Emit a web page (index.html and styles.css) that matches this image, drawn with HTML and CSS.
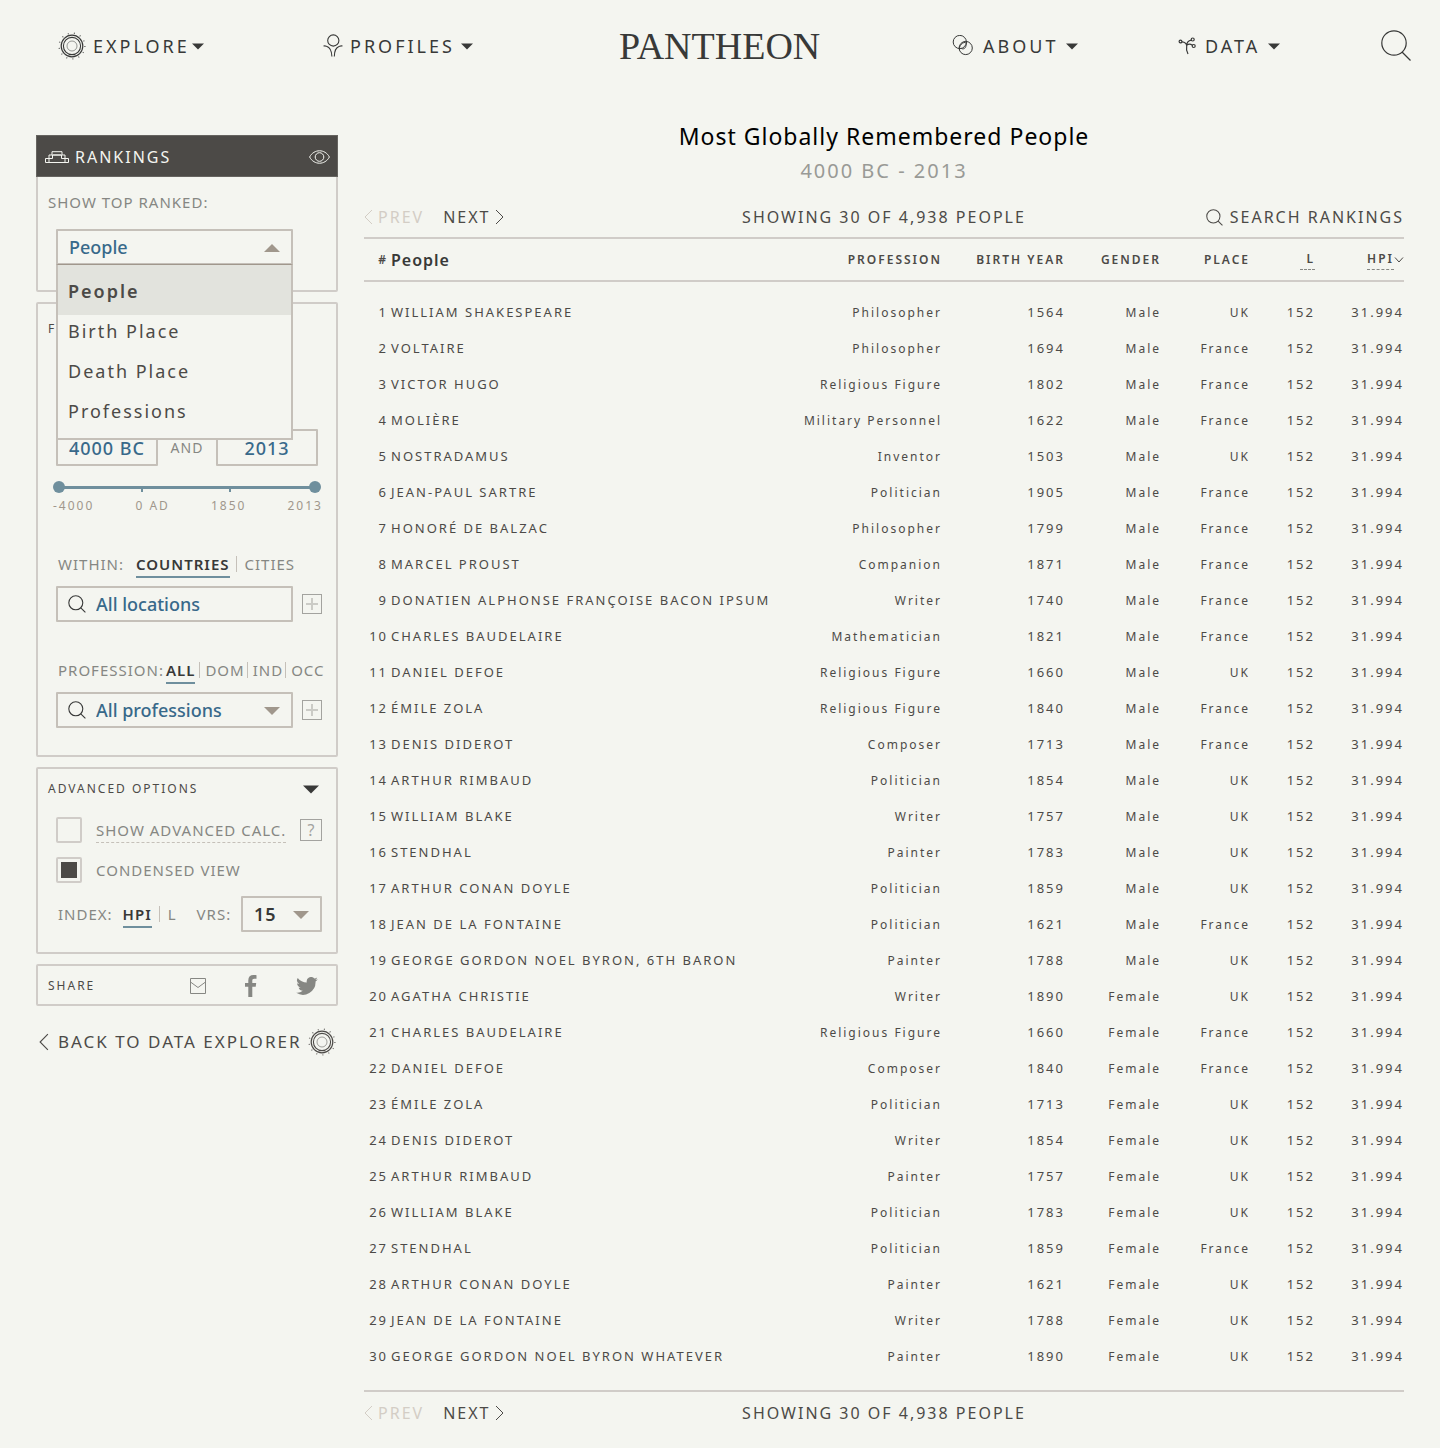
FILE: index.html
```html
<!DOCTYPE html>
<html lang="en">
<head>
<meta charset="utf-8">
<meta name="viewport" content="width=device-width, initial-scale=1">
<title>Pantheon – Rankings</title>
<link rel="stylesheet" href="styles.css">
</head>
<body>
<svg class="defs" aria-hidden="true">
  <symbol id="sun" viewBox="0 0 28 28"><g fill="none" stroke="currentColor"><circle cx="14" cy="14" r="10.8" stroke-width="1.2"/><circle cx="14" cy="14" r="8.6" stroke-width="1.1"/><circle cx="14" cy="14" r="5" stroke-width="1" opacity=".5"/><circle cx="14" cy="14" r="12.9" stroke-width="1.3" stroke-dasharray="1 5.234" opacity=".8"/></g></symbol>
  <symbol id="search" viewBox="0 0 32 32"><g fill="none" stroke="currentColor" stroke-width="1.200"><circle cx="14" cy="13" r="12.200"/><path d="M22 22l8.500 8.500"/></g></symbol>
  <symbol id="search-sm" viewBox="0 0 18 18"><g fill="none" stroke="currentColor" stroke-width="1.100"><circle cx="7.800" cy="7.800" r="7"/><path d="M12.800 12.800l4.600 4.600"/></g></symbol>
  <symbol id="plus" viewBox="0 0 12 12"><path d="M6 0v12M0 6h12" fill="none" stroke="currentColor" stroke-width="2"/></symbol>
  <symbol id="caret" viewBox="0 0 16 8"><path d="M0 0h16L8 8z" fill="currentColor"/></symbol>
  <symbol id="left" viewBox="0 0 9 16"><path d="M8 1L1 8l7 7" fill="none" stroke="currentColor"/></symbol>
  <symbol id="right" viewBox="0 0 9 16"><path d="M1 1l7 7-7 7" fill="none" stroke="currentColor"/></symbol>
</svg>

<header class="site-header">
  <a class="nav-item" href="#explore"><svg class="icon-sun"><use href="#sun"/></svg><span>EXPLORE</span><svg class="nav-caret"><use href="#caret"/></svg></a>
  <a class="nav-item" href="#profiles">
    <svg class="icon-profile" viewBox="0 0 20 24"><g fill="none" stroke="currentColor" stroke-width="1.1"><circle cx="10.300" cy="6.500" r="5.600"/><path d="M.5 12q1.500-.3 3 .3c4 1.300 5.200 4.200 5.400 10.200M19.500 12q-1.500-.3-3 .3c-4 1.300-5 4.200-5.200 10.200"/></g></svg>
    <span>PROFILES</span><svg class="nav-caret spaced"><use href="#caret"/></svg></a>
  <a class="logo" href="#home">PANTHEON</a>
  <a class="nav-item wide" href="#about">
    <svg class="icon-about" viewBox="0 0 22 22"><g fill="none" stroke="currentColor"><circle cx="7.800" cy="7" r="6.600"/><circle cx="13.700" cy="13" r="6.600"/><path d="M7.700 15.500c-1.500-4.500 3-9 7.300-8.200M9.300 13.500c3.800 1.500 5-2 5-5.500"/></g></svg>
    <span>ABOUT</span><svg class="nav-caret spaced"><use href="#caret"/></svg></a>
  <a class="nav-item wide" href="#data">
    <svg class="icon-data" viewBox="0 0 18 18"><g fill="none" stroke="currentColor" stroke-width="1.200"><circle cx="2.500" cy="4.500" r="1.400"/><circle cx="14.700" cy="2.500" r="1.500"/><circle cx="15.700" cy="9" r="1.500"/><path d="M4 4.800c3 .3 4.500 1.500 4.700 4C8 12 9 15 10 17M8.700 8.500c0-3 1.800-4.700 4.700-5.300M9 8c1.700-1.300 3.700-1 5.400.2"/></g></svg>
    <span>DATA</span><svg class="nav-caret spaced"><use href="#caret"/></svg></a>
  <button class="search-button" type="button" aria-label="Search"><svg><use href="#search"/></svg></button>
</header>

<div class="page">
  <aside class="sidebar">
    <section class="panel panel-rank">
      <h2 class="panel-head">
        <svg class="icon-podium" viewBox="0 0 24 12"><path d="M.5 11.500v-4h3.500v-3.500h3V.7h10V4h3v3.500h3.500v4zM4 7.500v4M4 7.500h3.500V4h9v3.500H20v4M7.500 4h9" fill="none" stroke="currentColor"/></svg>
        <span>RANKINGS</span>
        <svg class="icon-eye" viewBox="0 0 21 14"><g fill="none" stroke="currentColor"><path d="M.6 7C5-1.300 16-1.300 20.400 7 16 15.300 5 15.300.6 7z"/><circle cx="10.500" cy="7" r="4.300"/></g></svg>
      </h2>
      <label class="label" for="ranked">SHOW TOP RANKED:</label>
      <div class="dropdown">
        <select id="ranked" class="box"><option>People</option><option>Birth Place</option><option>Death Place</option><option>Professions</option></select>
        <svg class="box-caret up"><use href="#caret"/></svg>
        <ul class="menu" role="listbox" aria-label="Show top ranked">
          <li role="option" aria-selected="true">People</li>
          <li role="option">Birth Place</li>
          <li role="option">Death Place</li>
          <li role="option">Professions</li>
        </ul>
      </div>
    </section>

    <section class="panel panel-filter">
      <h2 class="panel-title">F</h2>
      <div class="years">
        <input class="box" type="text" value="4000 BC" aria-label="From year">
        <span>AND</span>
        <input class="box" type="text" value="2013" aria-label="To year">
      </div>
      <div class="slider">
        <input type="range" min="-4000" max="2013" value="-4000" aria-label="Earliest year">
        <input type="range" min="-4000" max="2013" value="2013" aria-label="Latest year">
      </div>
      <div class="scale"><span>-4000</span><span>0 AD</span><span>1850</span><span>2013</span></div>

      <div class="tabs tabs-within">
        <label for="location">WITHIN:</label>
        <button class="active" type="button">COUNTRIES</button><button type="button">CITIES</button>
      </div>
      <div class="field">
        <div class="control"><svg class="field-icon"><use href="#search-sm"/></svg><input id="location" class="box with-icon" type="text" value="All locations"></div>
        <button class="square" type="button" aria-label="Add location"><svg><use href="#plus"/></svg></button>
      </div>

      <div class="tabs tabs-prof">
        <label for="profession">PROFESSION:</label>
        <button class="active" type="button">ALL</button><button type="button">DOM</button><button type="button">IND</button><button type="button">OCC</button>
      </div>
      <div class="field">
        <div class="control"><svg class="field-icon"><use href="#search-sm"/></svg><select id="profession" class="box with-icon"><option>All professions</option></select><svg class="box-caret"><use href="#caret"/></svg></div>
        <button class="square" type="button" aria-label="Add profession"><svg><use href="#plus"/></svg></button>
      </div>
    </section>

    <section class="panel panel-advanced">
      <button class="advanced-head" type="button"><span>ADVANCED OPTIONS</span><svg><use href="#caret"/></svg></button>
      <div class="check"><input id="calc" type="checkbox"><label class="dotted" for="calc">SHOW ADVANCED CALC.</label><button class="square help" type="button">?</button></div>
      <div class="check"><input id="condensed" type="checkbox" checked><label for="condensed">CONDENSED VIEW</label></div>
      <div class="tabs tabs-index">
        <span>INDEX:</span>
        <button class="active" type="button">HPI</button><button type="button">L</button>
        <label class="vrs" for="version">VRS:</label>
        <div class="version"><select id="version" class="box"><option>15</option></select><svg class="box-caret"><use href="#caret"/></svg></div>
      </div>
    </section>

    <section class="panel panel-share">
      <h2 class="panel-title">SHARE</h2>
      <a href="#mail" aria-label="Email"><svg class="icon-mail" viewBox="0 0 16 16"><path d="M.5.500h15v15H.5zM.5 4L8 9.500 15.500 4" fill="none" stroke="currentColor"/></svg></a>
      <a href="#facebook" aria-label="Facebook"><svg class="icon-fb" viewBox="0 0 12 22"><path d="M3.300 22V11.800H0V8h3.300V5.200C3.300 1.800 5.300 0 8.400 0 9.800 0 11 .1 11.500.2v3.600H9.300C7.600 3.800 7.300 4.600 7.300 5.700V8h3.900l-.5 3.800H7.300V22z" fill="currentColor"/></svg></a>
      <a href="#twitter" aria-label="Twitter"><svg class="icon-tw" viewBox="0 0 24 20"><path d="M24 2.400a9.800 9.800 0 0 1-2.800.8A4.900 4.900 0 0 0 23.300.5a9.900 9.900 0 0 1-3.100 1.200 4.900 4.900 0 0 0-8.400 4.500A14 14 0 0 1 1.700 1a4.900 4.900 0 0 0 1.500 6.600 4.900 4.900 0 0 1-2.200-.6c0 2.300 1.600 4.400 3.900 4.900a5 5 0 0 1-2.200.1 4.900 4.900 0 0 0 4.600 3.400A9.900 9.900 0 0 1 0 17.500 14 14 0 0 0 21.500 5c1-.7 1.800-1.600 2.500-2.600z" fill="currentColor"/></svg></a>
    </section>

    <a class="back" href="#explorer"><svg class="chevron"><use href="#left"/></svg><span>BACK TO DATA EXPLORER</span><svg class="icon-sun"><use href="#sun"/></svg></a>
  </aside>

  <main class="content">
    <h1>Most Globally Remembered People</h1>
    <p class="subtitle">4000 BC - 2013</p>
    <nav class="pager">
      <div class="pager-links"><button type="button" disabled><svg class="arrow"><use href="#left"/></svg>PREV</button><button type="button">NEXT<svg class="arrow"><use href="#right"/></svg></button></div>
      <span>SHOWING 30 OF 4,938 PEOPLE</span>
      <button class="search-rankings" type="button"><svg><use href="#search-sm"/></svg>SEARCH RANKINGS</button>
    </nav>
    <table>
      <colgroup><col class="c-num"><col><col class="c-prof"><col class="c-year"><col class="c-gender"><col class="c-place"><col class="c-l"><col class="c-hpi"></colgroup>
      <thead><tr><th>#<th class="people">People<th>PROFESSION<th>BIRTH YEAR<th>GENDER<th>PLACE<th><span class="term term-l">L</span><th><span class="term">HPI</span><svg class="sort" viewBox="0 0 10 6"><path d="M1 .5l4 4.500 4-4.500" fill="none" stroke="currentColor"/></svg></thead>
      <tbody>
      <tr><td>1<td>WILLIAM SHAKESPEARE<td>Philosopher<td>1564<td>Male<td>UK<td>152<td>31.994
      <tr><td>2<td>VOLTAIRE<td>Philosopher<td>1694<td>Male<td>France<td>152<td>31.994
      <tr><td>3<td>VICTOR HUGO<td>Religious Figure<td>1802<td>Male<td>France<td>152<td>31.994
      <tr><td>4<td>MOLIÈRE<td>Military Personnel<td>1622<td>Male<td>France<td>152<td>31.994
      <tr><td>5<td>NOSTRADAMUS<td>Inventor<td>1503<td>Male<td>UK<td>152<td>31.994
      <tr><td>6<td>JEAN-PAUL SARTRE<td>Politician<td>1905<td>Male<td>France<td>152<td>31.994
      <tr><td>7<td>HONORÉ DE BALZAC<td>Philosopher<td>1799<td>Male<td>France<td>152<td>31.994
      <tr><td>8<td>MARCEL PROUST<td>Companion<td>1871<td>Male<td>France<td>152<td>31.994
      <tr><td>9<td>DONATIEN ALPHONSE FRANÇOISE BACON IPSUM<td>Writer<td>1740<td>Male<td>France<td>152<td>31.994
      <tr><td>10<td>CHARLES BAUDELAIRE<td>Mathematician<td>1821<td>Male<td>France<td>152<td>31.994
      <tr><td>11<td>DANIEL DEFOE<td>Religious Figure<td>1660<td>Male<td>UK<td>152<td>31.994
      <tr><td>12<td>ÉMILE ZOLA<td>Religious Figure<td>1840<td>Male<td>France<td>152<td>31.994
      <tr><td>13<td>DENIS DIDEROT<td>Composer<td>1713<td>Male<td>France<td>152<td>31.994
      <tr><td>14<td>ARTHUR RIMBAUD<td>Politician<td>1854<td>Male<td>UK<td>152<td>31.994
      <tr><td>15<td>WILLIAM BLAKE<td>Writer<td>1757<td>Male<td>UK<td>152<td>31.994
      <tr><td>16<td>STENDHAL<td>Painter<td>1783<td>Male<td>UK<td>152<td>31.994
      <tr><td>17<td>ARTHUR CONAN DOYLE<td>Politician<td>1859<td>Male<td>UK<td>152<td>31.994
      <tr><td>18<td>JEAN DE LA FONTAINE<td>Politician<td>1621<td>Male<td>France<td>152<td>31.994
      <tr><td>19<td>GEORGE GORDON NOEL BYRON, 6TH BARON<td>Painter<td>1788<td>Male<td>UK<td>152<td>31.994
      <tr><td>20<td>AGATHA CHRISTIE<td>Writer<td>1890<td>Female<td>UK<td>152<td>31.994
      <tr><td>21<td>CHARLES BAUDELAIRE<td>Religious Figure<td>1660<td>Female<td>France<td>152<td>31.994
      <tr><td>22<td>DANIEL DEFOE<td>Composer<td>1840<td>Female<td>France<td>152<td>31.994
      <tr><td>23<td>ÉMILE ZOLA<td>Politician<td>1713<td>Female<td>UK<td>152<td>31.994
      <tr><td>24<td>DENIS DIDEROT<td>Writer<td>1854<td>Female<td>UK<td>152<td>31.994
      <tr><td>25<td>ARTHUR RIMBAUD<td>Painter<td>1757<td>Female<td>UK<td>152<td>31.994
      <tr><td>26<td>WILLIAM BLAKE<td>Politician<td>1783<td>Female<td>UK<td>152<td>31.994
      <tr><td>27<td>STENDHAL<td>Politician<td>1859<td>Female<td>France<td>152<td>31.994
      <tr><td>28<td>ARTHUR CONAN DOYLE<td>Painter<td>1621<td>Female<td>UK<td>152<td>31.994
      <tr><td>29<td>JEAN DE LA FONTAINE<td>Writer<td>1788<td>Female<td>UK<td>152<td>31.994
      <tr><td>30<td>GEORGE GORDON NOEL BYRON WHATEVER<td>Painter<td>1890<td>Female<td>UK<td>152<td>31.994
      </tbody>
    </table>
    <nav class="pager pager-bottom" aria-label="Bottom pager">
      <div class="pager-links"><button type="button" disabled><svg class="arrow"><use href="#left"/></svg>PREV</button><button type="button">NEXT<svg class="arrow"><use href="#right"/></svg></button></div>
      <span>SHOWING 30 OF 4,938 PEOPLE</span>
    </nav>
  </main>
</div>
</body>
</html>
```

FILE: styles.css
```css
:root {
  --bg: #f4f5f0;
  --ink: #383938;
  --text: #4c4a47;
  --muted: #868783;
  --line: #d0ccc8;
  --box: #c5c0b9;
  --blue: #38698a;
  --steel: #6f8f9d;
  --taupe: #a0978c;
}
* { box-sizing: border-box; }
body {
  margin: 0;
  background: var(--bg);
  color: var(--text);
  font-family: "Noto Sans", "Open Sans", sans-serif;
}
svg { display: block; flex: none; }
a { color: inherit; text-decoration: none; }
h1, h2, p, ul { margin: 0; padding: 0; font-weight: 400; }
button, input, select { margin: 0; font: inherit; color: inherit; letter-spacing: inherit; }
button { padding: 0; border: 0; background: none; }
.defs { position: absolute; width: 0; height: 0; }

/* Header */
.site-header {
  display: grid;
  grid-template-columns: 265fr 296fr 333fr 226fr 202fr 30px;
  align-items: center;
  height: 92px;
  padding: 0 30px 0 58px;
  color: var(--ink);
}
.nav-item {
  display: flex;
  align-items: center;
  gap: 7px;
  font-size: 18px;
  letter-spacing: 3px;
}
.nav-item.wide { gap: 9px; }
.nav-caret { width: 12px; height: 7px; margin-left: -5px; }
.nav-caret.spaced { margin-left: -1px; }
.icon-sun { width: 28px; height: 28px; }
.icon-profile { width: 20px; height: 24px; }
.icon-about { width: 22px; height: 22px; }
.icon-data { width: 18px; height: 18px; }
.logo { font-family: "Liberation Serif", serif; font-size: 38px; line-height: 44px; }
.search-button svg { width: 32px; height: 32px; }

/* Page */
.page {
  display: grid;
  grid-template-columns: 302px minmax(0, 1fr);
  column-gap: 26px;
  padding: 0 36px 20px;
}
.sidebar { display: flex; flex-direction: column; gap: 10px; padding-top: 43px; }
.panel { border: 2px solid var(--line); border-radius: 2px; }
.panel-head {
  display: flex;
  align-items: center;
  gap: 6px;
  height: 42px;
  margin: -2px -2px 0;
  padding: 1px 7px 0 8px;
  border: 1px solid #666460;
  background: var(--text);
  color: #f4f5f0;
  font-size: 16px;
  letter-spacing: 2px;
}
.icon-podium { width: 24px; height: 12px; }
.icon-eye { width: 21px; height: 14px; margin-left: auto; }
.panel-title { font-size: 12px; line-height: 24px; letter-spacing: 2px; }
.label { color: var(--muted); font-size: 15px; line-height: 24px; letter-spacing: 1px; }
.box {
  display: block;
  width: 100%;
  height: 36px;
  padding: 0 11px;
  border: 2px solid var(--box);
  border-radius: 1px;
  outline: 0;
  background: transparent;
  appearance: none;
  color: var(--blue);
  font-size: 18px;
  font-weight: 500;
  letter-spacing: 0;
}
.box.with-icon { padding-left: 38px; }
.box-caret {
  position: absolute;
  right: 13px;
  top: 15px;
  width: 16px;
  height: 8px;
  color: var(--taupe);
  pointer-events: none;
}
.box-caret.up { transform: rotate(180deg); }

.panel-rank { padding: 0 0 25px; }
.panel-rank .label { display: block; padding: 13px 0 15px 10px; }
.dropdown { position: relative; width: 237px; margin-left: 18px; }
.menu {
  position: absolute;
  z-index: 2;
  top: 35px;
  left: 0;
  right: 0;
  padding-bottom: 3px;
  border: 2px solid var(--box);
  border-top: 1px solid var(--taupe);
  background: var(--bg);
  list-style: none;
  font-size: 18px;
  line-height: 32px;
  letter-spacing: 2px;
}
.menu li { padding: 0 10px 8px; }
.menu li[aria-selected] { padding: 10px 10px 8px; background: #e2e3dd; font-weight: 600; }

.panel-filter { padding: 13px 12px 27px 18px; }
.panel-filter .panel-title { margin-left: -8px; }
.years {
  display: flex;
  align-items: center;
  justify-content: space-between;
  width: 262px;
  margin-top: 88px;
  color: var(--muted);
  font-size: 14px;
  letter-spacing: 1px;
}
.years .box { width: 102px; height: 37px; padding: 0; text-align: center; letter-spacing: 1px; }
.slider {
  position: relative;
  height: 12px;
  margin: 15px 3px 0 -3px;
  background:
    linear-gradient(var(--steel), var(--steel)) center / 256px 3px no-repeat,
    linear-gradient(var(--steel), var(--steel)) 33% 8px / 2px 3px no-repeat,
    linear-gradient(var(--steel), var(--steel)) 66% 8px / 2px 3px no-repeat;
}
.slider input {
  position: absolute;
  inset: 0;
  width: 100%;
  height: 12px;
  appearance: none;
  background: none;
  pointer-events: none;
}
.slider input::-webkit-slider-thumb {
  width: 12px;
  height: 12px;
  appearance: none;
  border-radius: 50%;
  background: var(--steel);
  pointer-events: auto;
}
.scale {
  display: flex;
  justify-content: space-between;
  margin: 5px 1px 0 -3px;
  color: var(--taupe);
  font-size: 12px;
  line-height: 16px;
  letter-spacing: 2px;
}
.tabs {
  display: flex;
  align-items: center;
  padding-left: 2px;
  color: var(--muted);
  font-size: 15px;
  line-height: 20px;
  letter-spacing: 1px;
  white-space: nowrap;
}
.tabs button { line-height: 20px; }
.tabs .active {
  padding-bottom: 2px;
  border-bottom: 2px solid var(--steel);
  margin-bottom: -4px;
  color: var(--ink);
  font-weight: 600;
}
.tabs button + button { padding-left: 9px; position: relative; }
.tabs button + button::before {
  content: "";
  position: absolute;
  left: 0;
  top: 2px;
  width: 1px;
  height: 16px;
  background: var(--box);
}
.tabs-within { margin-top: 40px; height: 20px; }
.tabs-within .active { margin-left: 12px; margin-right: 6px; }
.tabs-prof { height: 20px; margin-top: 38px; }
.tabs-prof .active { margin-left: 2px; margin-right: 4px; }
.tabs-prof button + button { padding-left: 6px; padding-right: 2px; }
.field { display: flex; align-items: center; gap: 9px; margin-top: 12px; }
.control { position: relative; width: 237px; }
.field-icon { position: absolute; left: 12px; top: 9px; width: 18px; height: 18px; color: var(--ink); }
.square {
  display: grid;
  place-items: center;
  width: 20px;
  height: 20px;
  border: 1px solid #a3a39f;
  color: #a3a39f;
}
.square svg { width: 12px; height: 12px; color: #cbcbc6; }

.panel-advanced { padding: 8px 14px 20px 18px; }
.advanced-head {
  display: flex;
  align-items: center;
  justify-content: space-between;
  width: 100%;
  padding: 0 3px 0 0;
  font-size: 12px;
  line-height: 24px;
  letter-spacing: 2px;
}
.advanced-head span { margin-left: -8px; }
.advanced-head svg { width: 16px; height: 9px; color: var(--ink); }
.check {
  display: flex;
  align-items: center;
  height: 26px;
  margin-top: 14px;
  color: var(--muted);
  font-size: 15px;
  line-height: 24px;
  letter-spacing: 1px;
}
.advanced-head + .check { margin-top: 16px; }
.check input {
  width: 26px;
  height: 26px;
  margin-right: 14px;
  border: 2px solid var(--line);
  border-radius: 2px;
  appearance: none;
}
.check input:checked { padding: 3px; background: var(--text) content-box; }
.dotted { border-bottom: 1px dashed var(--box); }
.square.help { width: 22px; height: 22px; margin-left: auto; font-size: 16px; line-height: 20px; letter-spacing: 0; }
.tabs-index { margin-top: 13px; height: 36px; }
.tabs-index .active { margin-left: 10px; margin-right: 7px; }
.tabs-index .vrs { margin-left: 20px; }
.version { position: relative; width: 81px; margin-left: auto; }
.version .box { color: var(--ink); font-weight: 600; letter-spacing: 1px; }
.version .box-caret { right: 13px; }

.panel-share {
  display: flex;
  align-items: center;
  height: 42px;
  padding: 1px 18px 0 10px;
  color: var(--muted);
}
.panel-share .panel-title { margin-right: auto; color: var(--text); }
.icon-mail { width: 16px; height: 16px; }
.icon-fb { width: 12px; height: 22px; margin: 0 39px; }
.icon-tw { width: 22px; height: 18px; }
.back {
  display: flex;
  align-items: center;
  margin-top: 12px;
  padding: 0 2px 0 3px;
  font-size: 17px;
  line-height: 28px;
  letter-spacing: 2px;
  white-space: nowrap;
}
.back .chevron { width: 10px; height: 18px; margin-right: 9px; }
.back .icon-sun { margin-left: auto; }

/* Rankings */
.content { padding-top: 26px; }
h1 {
  color: #000;
  font-size: 23px;
  line-height: 36px;
  letter-spacing: 1px;
  text-align: center;
}
.subtitle {
  color: #999a96;
  font-size: 20px;
  line-height: 34px;
  letter-spacing: 2px;
  text-align: center;
}
.pager {
  display: grid;
  grid-template-columns: 1fr auto 1fr;
  align-items: center;
  height: 40px;
  margin-top: 9px;
  font-size: 16px;
  letter-spacing: 2px;
}
.pager-links { display: flex; gap: 19px; }
.pager button { display: flex; align-items: center; gap: 5px; }
.pager button:disabled { color: #d3cdc5; }
.arrow { width: 9px; height: 16px; }
.search-rankings { justify-self: end; }
.pager .search-rankings { gap: 7px; }
.search-rankings svg { width: 17px; height: 17px; }

table { width: 100%; table-layout: fixed; border-collapse: separate; border-spacing: 0; border-bottom: 2px solid var(--line); padding-bottom: 16px; }
.c-num { width: 24px; }
.c-prof { width: 142px; }
.c-year { width: 123px; }
.c-gender { width: 96px; }
.c-place { width: 89px; }
.c-l { width: 65px; }
.c-hpi { width: 89px; }
th {
  height: 45px;
  padding: 0;
  border: solid var(--line);
  border-width: 2px 0;
  font-size: 12px;
  font-weight: 600;
  letter-spacing: 2px;
  text-align: right;
  white-space: nowrap;
}
th.people { padding-left: 3px; color: var(--ink); font-size: 16px; letter-spacing: 1px; text-align: left; }
.term { display: inline-block; border-bottom: 1px dashed var(--muted); line-height: 20px; }
.term-l { padding-left: 6px; }
.sort { display: inline-block; width: 10px; height: 6px; }
tbody::before { content: ""; display: table-row; height: 12px; }
td { height: 36px; padding: 0; font-size: 13px; letter-spacing: 2px; text-align: right; white-space: nowrap; }
td:nth-child(2) { padding-left: 3px; text-align: left; }
td:nth-child(3), td:nth-child(5), td:nth-child(6) { font-size: 12px; }
.pager-bottom { margin-top: 1px; }
```
